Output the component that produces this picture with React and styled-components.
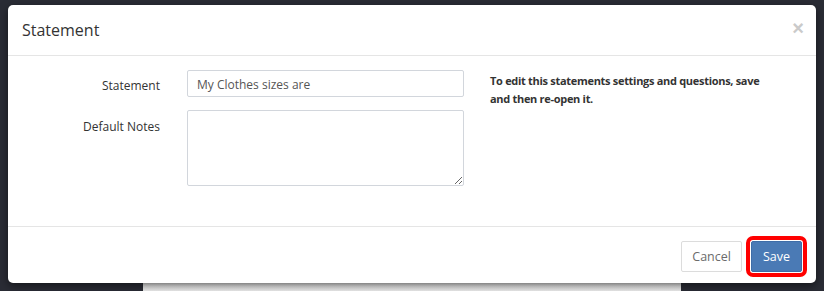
import React from "react";
import styled, { createGlobalStyle } from "styled-components";

const GlobalStyle = createGlobalStyle`
  html, body {
    margin: 0;
    padding: 0;
    background: #2a2c35;
    font-family: "Open Sans", "Liberation Sans", sans-serif;
  }
`;

const Backdrop = styled.div`
  width: 824px;
  height: 291px;
  padding: 5px 0 0 8px;
  box-sizing: border-box;
  overflow: hidden;
  background: #2a2c35;
  display: flex;
  flex-direction: column;
`;

const Modal = styled.div`
  position: relative;
  z-index: 1;
  flex-shrink: 0;
  width: 808px;
  height: 278px;
  background: #fff;
  border-radius: 5px;
  box-shadow: 0 3px 9px rgba(0, 0, 0, 0.5);
  display: flex;
  flex-direction: column;
`;

const PageBehind = styled.div`
  flex-shrink: 0;
  margin-left: 135px;
  width: 538px;
  height: 8px;
  background: linear-gradient(#d9d9d9, #ececec 3px, #efefef);
`;

const Header = styled.div`
  height: 51px;
  box-sizing: border-box;
  padding: 0 14px;
  border-bottom: 1px solid #e5e5e5;
  display: flex;
  align-items: center;
  justify-content: space-between;
`;

const Title = styled.h4`
  margin: 0;
  font-size: 16px;
  font-weight: 400;
  color: #333;
`;

const Close = styled.button`
  border: 0;
  background: none;
  padding: 0 0 3px 0;
  margin-right: -2px;
  font-family: "Liberation Sans", sans-serif;
  font-size: 20px;
  font-weight: 700;
  color: #cacaca;
  cursor: pointer;
`;

const Body = styled.div`
  flex: 1;
  padding: 14px 0 0 0;
  display: flex;
  align-items: flex-start;
`;

const Form = styled.div`
  display: grid;
  grid-template-columns: 152px 277px;
  column-gap: 27px;
  row-gap: 13px;
`;

const Label = styled.label`
  text-align: right;
  font-size: 12px;
  color: #333;
  padding-top: ${(p) => (p.$top ? "8px" : "0")};
  align-self: ${(p) => (p.$top ? "start" : "center")};
  margin-top: ${(p) => (p.$top ? "0" : "3px")};
`;

const Input = styled.input`
  box-sizing: border-box;
  width: 277px;
  height: 27px;
  padding: 1px 9px 0;
  border: 1px solid #d2d6dc;
  border-radius: 2px;
  font-family: inherit;
  font-size: 12px;
  color: #555;
  outline: none;
`;

const TextArea = styled.textarea`
  box-sizing: border-box;
  width: 277px;
  height: 76px;
  border: 1px solid #d2d6dc;
  border-radius: 2px;
  font-family: inherit;
  font-size: 12px;
  outline: none;
  resize: vertical;
`;

const Note = styled.p`
  margin: 0 0 0 26px;
  width: 282px;
  padding-top: 2px;
  font-size: 11px;
  line-height: 18px;
  font-weight: 700;
  letter-spacing: -0.3px;
  color: #333;
`;

const Footer = styled.div`
  height: 57px;
  box-sizing: border-box;
  border-top: 1px solid #e5e5e5;
  padding: 0 14px 0 0;
  display: flex;
  align-items: center;
  justify-content: flex-end;
  gap: 9px;
`;

const Button = styled.button`
  height: 31px;
  padding: 0 ${(p) => (p.$primary ? "11px" : "10px")};
  border-radius: 2px;
  font-family: inherit;
  font-size: 12.5px;
  cursor: pointer;
  border: 1px solid ${(p) => (p.$primary ? "#3e6da8" : "#dcdcdc")};
  background: ${(p) => (p.$primary ? "#4a7ab5" : "#fff")};
  color: ${(p) => (p.$primary ? "#fff" : "#6b6b6b")};
  outline: ${(p) => (p.$highlight ? "4px solid #ff0000" : "none")};
  outline-offset: 1px;
  margin-top: 2px;
`;

export default function App() {
  return (
    <>
      <GlobalStyle />
      <Backdrop>
        <Modal>
          <Header>
            <Title>Statement</Title>
            <Close aria-label="Close">×</Close>
          </Header>
          <Body>
            <Form>
              <Label>Statement</Label>
              <Input defaultValue="My Clothes sizes are" />
              <Label $top>Default Notes</Label>
              <TextArea />
            </Form>
            <Note>
              To edit this statements settings and questions, save and then
              re-open it.
            </Note>
          </Body>
          <Footer>
            <Button>Cancel</Button>
            <Button $primary $highlight>
              Save
            </Button>
          </Footer>
        </Modal>
        <PageBehind />
      </Backdrop>
    </>
  );
}
